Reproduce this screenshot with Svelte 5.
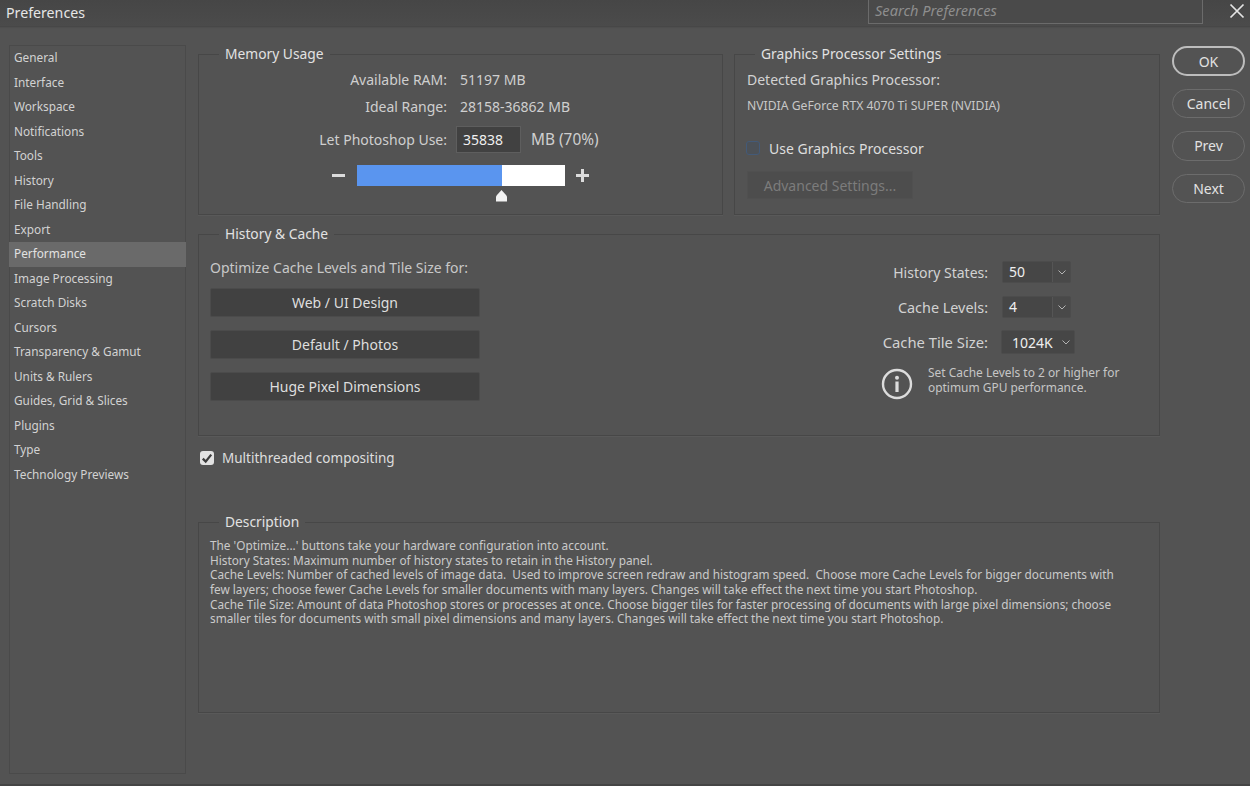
<script lang="ts">
	const categories = [
		'General', 'Interface', 'Workspace', 'Notifications', 'Tools', 'History', 'File Handling',
		'Export', 'Performance', 'Image Processing', 'Scratch Disks', 'Cursors', 'Transparency & Gamut',
		'Units & Rulers', 'Guides, Grid & Slices', 'Plugins', 'Type', 'Technology Previews'
	];
	const active = 'Performance';
	const presets = ['Web / UI Design', 'Default / Photos', 'Huge Pixel Dimensions'];
	const actions = ['OK', 'Cancel', 'Prev', 'Next'];
	const description = [
		"The 'Optimize...' buttons take your hardware configuration into account.",
		'History States: Maximum number of history states to retain in the History panel.',
		'Cache Levels: Number of cached levels of image data.  Used to improve screen redraw and histogram speed.  Choose more Cache Levels for bigger documents with',
		'few layers; choose fewer Cache Levels for smaller documents with many layers. Changes will take effect the next time you start Photoshop.',
		'Cache Tile Size: Amount of data Photoshop stores or processes at once. Choose bigger tiles for faster processing of documents with large pixel dimensions; choose',
		'smaller tiles for documents with small pixel dimensions and many layers. Changes will take effect the next time you start Photoshop.'
	];
	// the slider's fill stops just short of the 70% shown in the label
	const usedPercent = 69.6;
</script>

<div class="dialog">
	<header class="titlebar">
		<span class="title">Preferences</span>
		<div class="search">Search Preferences</div>
		<svg class="close" width="16" height="16" viewBox="0 0 16 16" aria-hidden="true">
			<path d="M1.5 1.5 14.5 14.5M14.5 1.5 1.5 14.5" stroke="#e4e4e4" stroke-width="1.7" fill="none" />
		</svg>
	</header>

	<div class="body">
		<nav class="sidebar">
			{#each categories as c}
				<div class="cat" class:active={c === active}>{c}</div>
			{/each}
		</nav>

		<main class="content">
			<div class="top">
				<fieldset class="memory">
					<legend>Memory Usage</legend>
					<div class="mem-grid">
						<span class="lbl">Available RAM:</span><span class="val">51197 MB</span>
						<span class="lbl">Ideal Range:</span><span class="val">28158-36862 MB</span>
						<span class="lbl">Let Photoshop Use:</span>
						<span class="use"><span class="num">35838</span><span class="val pct">MB (70%)</span></span>
					</div>
					<div class="slider">
						<span class="step minus"></span>
						<div class="track">
							<div class="fill" style="width: {usedPercent}%"></div>
							<svg class="thumb" width="13" height="12" viewBox="0 0 13 12" aria-hidden="true">
								<path d="M6.5 0 11 5 12 6.5V11.5H1V6.5L2 5Z" fill="#f2f2f2" />
							</svg>
						</div>
						<span class="step plus"></span>
					</div>
				</fieldset>

				<fieldset class="gpu">
					<legend>Graphics Processor Settings</legend>
					<div class="gpu-body">
						<div class="gpu-label">Detected Graphics Processor:</div>
						<div class="gpu-name">NVIDIA GeForce RTX 4070 Ti SUPER (NVIDIA)</div>
						<div class="check-row">
							<span class="box off"></span>
							<span class="check-text">Use Graphics Processor</span>
						</div>
						<div class="adv">Advanced Settings...</div>
					</div>
				</fieldset>
			</div>

			<fieldset class="history">
				<legend>History &amp; Cache</legend>
				<div class="history-body">
					<div class="presets">
						<div class="opt-label">Optimize Cache Levels and Tile Size for:</div>
						{#each presets as p}
							<div class="preset">{p}</div>
						{/each}
					</div>
					<div class="cache">
						<div class="field">
							<span class="lbl">History States:</span>
							<span class="combo"><span class="combo-val">50</span><span class="combo-btn"><svg width="8" height="5" viewBox="0 0 8 5"><path d="M.5.5 4 4 7.5.5" stroke="#b4b4b4" fill="none" /></svg></span></span>
						</div>
						<div class="field f2">
							<span class="lbl">Cache Levels:</span>
							<span class="combo"><span class="combo-val">4</span><span class="combo-btn"><svg width="8" height="5" viewBox="0 0 8 5"><path d="M.5.5 4 4 7.5.5" stroke="#b4b4b4" fill="none" /></svg></span></span>
						</div>
						<div class="field f3">
							<span class="lbl">Cache Tile Size:</span>
							<span class="select">1024K<svg width="8" height="5" viewBox="0 0 8 5"><path d="M.5.5 4 4 7.5.5" stroke="#b4b4b4" fill="none" /></svg></span>
						</div>
						<div class="note">
							<svg width="32" height="32" viewBox="0 0 32 32" aria-hidden="true">
								<circle cx="16" cy="16" r="14" stroke="#dcdcdc" stroke-width="2.4" fill="none" />
								<circle cx="16" cy="9.8" r="2" fill="#dcdcdc" />
								<rect x="14.4" y="13.5" width="3.2" height="10.5" fill="#dcdcdc" />
							</svg>
							<p>Set Cache Levels to 2 or higher for<br />optimum GPU performance.</p>
						</div>
					</div>
				</div>
			</fieldset>

			<div class="check-row multi">
				<span class="box on">
					<svg width="12" height="11" viewBox="0 0 12 11" aria-hidden="true">
						<path d="M1.8 5.6 4.7 8.6 10.2 1.6" stroke="#3c3c3c" stroke-width="2.3" fill="none" />
					</svg>
				</span>
				<span class="check-text">Multithreaded compositing</span>
			</div>

			<fieldset class="description">
				<legend>Description</legend>
				<div class="desc-body">
					{#each description as line}
						<div class="desc-line">{line}</div>
					{/each}
				</div>
			</fieldset>
		</main>

		<aside class="actions">
			{#each actions as a, i}
				<div class="pill" class:primary={i === 0}>{a}</div>
			{/each}
		</aside>
	</div>
</div>

<style>
	:global(body) {
		margin: 0;
		background: #535353;
	}
	.dialog {
		width: 1250px;
		height: 786px;
		box-sizing: border-box;
		overflow: hidden;
		background: #535353;
		color: #d6d6d6;
		font-family: "Noto Sans", sans-serif;
		font-size: 14px;
		border-bottom: 2px solid #454545;
	}
	.titlebar {
		height: 26px;
		display: flex;
		align-items: flex-start;
		background: linear-gradient(#464646, #4b4b4b);
		border-bottom: 1px solid #474747;
		box-shadow: 0 1px 1px #4e4e4e;
	}
	.title {
		margin: 3px 0 0 6px;
		font-size: 14.2px;
		color: #e6e6e6;
	}
	.search {
		margin-left: auto;
		width: 335px;
		height: 24px;
		box-sizing: border-box;
		padding: 0 0 0 6px;
		border: 1px solid #6b6b6b;
		border-top: 0;
		background: #4a4a4a;
		color: #8e8e8e;
		font-style: italic;
		font-size: 14.6px;
	}
	.close {
		margin: 3px 5px 0 26px;
	}
	.body {
		display: grid;
		grid-template-columns: 177px 962px 73px;
		column-gap: 12px;
		padding: 18px 0 0 9px;
		align-items: start;
	}
	.sidebar {
		height: 729px;
		box-sizing: border-box;
		border: 1px solid #4a4a4a;
		font-size: 11.8px;
	}
	.cat {
		height: 24.5px;
		line-height: 23px;
		padding-left: 4px;
		color: #d2d2d2;
	}
	.cat.active {
		margin: 0 -1px;
		padding-left: 5px;
		background: #6a6a6a;
		color: #e2e2e2;
	}
	.content {
		display: flex;
		flex-direction: column;
	}
	.top {
		display: flex;
		gap: 11px;
	}
	fieldset {
		margin: 0;
		padding: 0;
		min-width: 0;
		box-sizing: border-box;
		border: 1px solid #474747;
		box-shadow: 0 1px 0 #595959;
	}
	legend {
		margin-left: 20px;
		padding: 0 6px;
		height: 18px;
		line-height: 18px;
		font-size: 13.8px;
		color: #e2e2e2;
	}
	.memory {
		width: 525px;
		height: 170px;
	}
	.mem-grid {
		display: grid;
		grid-template-columns: 248px auto;
		column-gap: 13px;
		grid-template-rows: 27px 27px 38px;
		align-items: center;
		margin-top: 3px;
	}
	.lbl {
		text-align: right;
		color: #cfcfcf;
	}
	.val {
		color: #cfcfcf;
	}
	.pct {
		font-size: 15.4px;
	}
	.use {
		display: flex;
		align-items: center;
		gap: 10px;
		margin-left: -4px;
	}
	.num {
		width: 65px;
		height: 27px;
		box-sizing: border-box;
		padding-left: 6px;
		line-height: 26px;
		background: #414141;
		border: 1px solid #5e5e5e;
		color: #f0f0f0;
	}
	.slider {
		display: flex;
		align-items: center;
		margin: 7px 0 0 133px;
	}
	.step {
		position: relative;
		width: 13px;
		height: 3px;
		background: #dcdcdc;
	}
	.step.minus {
		margin-right: 12px;
	}
	.step.plus {
		margin-left: 11px;
	}
	.step.plus::after {
		content: '';
		position: absolute;
		left: 5px;
		top: -5px;
		width: 3px;
		height: 13px;
		background: #dcdcdc;
	}
	.track {
		position: relative;
		width: 208px;
		height: 21px;
		background: #fff;
	}
	.fill {
		height: 100%;
		background: #5a95ef;
	}
	.thumb {
		position: absolute;
		left: 138px;
		top: 25px;
	}
	.gpu {
		width: 426px;
		height: 170px;
	}
	.gpu-body {
		padding-left: 12px;
	}
	.gpu-label {
		margin-top: 7px;
		line-height: 20px;
		color: #d2d2d2;
	}
	.gpu-name {
		margin-top: 7px;
		font-size: 12.2px;
		line-height: 18px;
		color: #c8c8c8;
	}
	.check-row {
		display: flex;
		align-items: center;
		gap: 8px;
	}
	.gpu .check-row {
		margin: 23px 0 0 -1px;
		height: 20px;
		gap: 9px;
	}
	.box {
		width: 14px;
		height: 14px;
		box-sizing: border-box;
		border-radius: 3px;
		display: flex;
		align-items: center;
		justify-content: center;
		flex: none;
	}
	.box.off {
		background: #4c5157;
		border: 1.5px solid #435a78;
	}
	.box.on {
		background: #e2e2e2;
	}
	.check-text {
		color: #dedede;
	}
	.multi .check-text {
		font-size: 13.5px;
	}
	.adv {
		margin-top: 13px;
		width: 166px;
		height: 28px;
		line-height: 27px;
		text-align: center;
		background: #4d4d4d;
		border: 1px solid #505050;
		box-sizing: border-box;
		color: #7c7c7c;
	}
	.history {
		margin-top: 10px;
		width: 962px;
		height: 211px;
	}
	.history-body {
		display: flex;
		justify-content: space-between;
	}
	.presets {
		padding-left: 11px;
	}
	.opt-label {
		margin-top: 15px;
		line-height: 20px;
		color: #c8c8c8;
	}
	.preset {
		width: 270px;
		height: 29px;
		box-sizing: border-box;
		margin-top: 13px;
		line-height: 27px;
		text-align: center;
		background: #414141;
		border: 1px solid #4b4b4b;
		border-radius: 2px;
		color: #dedede;
	}
	.opt-label + .preset {
		margin-top: 10px;
	}
	.cache {
		width: 290px;
		padding-top: 18px;
	}
	.field {
		display: flex;
		justify-content: flex-end;
		align-items: center;
		gap: 14px;
		height: 22px;
		padding-right: 88px;
	}
	.field .lbl {
		color: #d2d2d2;
	}
	.f2 {
		margin-top: 13px;
	}
	.f2 .lbl {
		font-size: 14.4px;
	}
	.f3 {
		margin-top: 12px;
		height: 24px;
		padding-right: 84px;
		gap: 13px;
	}
	.f3 .lbl {
		font-size: 14.8px;
	}
	.combo {
		display: flex;
		width: 69px;
		height: 22px;
		box-sizing: border-box;
		background: #464646;
		border: 1px solid #4c4c4c;
		border-radius: 2px;
	}
	.combo-val {
		flex: 1;
		padding-left: 6px;
		line-height: 20px;
		color: #efefef;
	}
	.combo-btn {
		width: 17px;
		display: flex;
		align-items: center;
		justify-content: center;
		background: #494949;
		border-left: 1px solid #555;
	}
	.select {
		width: 74px;
		height: 24px;
		box-sizing: border-box;
		display: flex;
		align-items: center;
		justify-content: space-between;
		padding: 0 4px 0 10px;
		background: #464646;
		border: 1px solid #4c4c4c;
		border-radius: 2px;
		color: #efefef;
	}
	.note {
		display: flex;
		align-items: flex-start;
		gap: 15px;
		margin: 2px 0 0 12px;
	}
	.note svg {
		margin-top: 12px;
	}
	.note p {
		margin: 9px 0 0;
		font-size: 11.95px;
		line-height: 15px;
		color: #c6c6c6;
	}
	.multi {
		margin-top: 12px;
		height: 20px;
		padding-left: 2px;
	}
	.description {
		margin-top: 45px;
		width: 962px;
		height: 200px;
	}
	.desc-body {
		padding: 7px 0 0 11px;
	}
	.desc-line {
		height: 14.7px;
		line-height: 14.7px;
		font-size: 11.8px;
		white-space: pre;
		color: #cacaca;
	}
	.actions {
		display: flex;
		flex-direction: column;
		gap: 13px;
		margin-top: 1px;
	}
	.pill {
		height: 29.5px;
		box-sizing: border-box;
		line-height: 28px;
		text-align: center;
		border: 1px solid #6c6c6c;
		border-radius: 15px;
		color: #e2e2e2;
	}
	.pill.primary {
		border: 2px solid #bdbdbd;
		line-height: 27px;
	}
</style>
